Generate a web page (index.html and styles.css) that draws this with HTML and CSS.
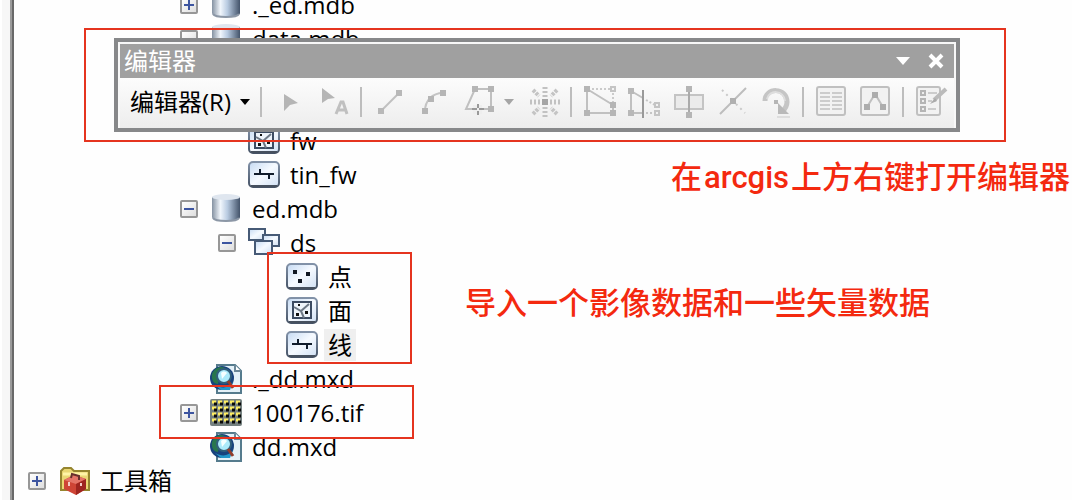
FILE: index.html
```html
<!DOCTYPE html>
<html lang="zh-CN">
<head>
<meta charset="utf-8">
<title>编辑器</title>
<link rel="stylesheet" href="styles.css">
</head>
<body>
<svg class="defs" aria-hidden="true">
  <defs>
    <linearGradient id="metal"><stop offset="0" stop-color="#8592a2"/><stop offset=".3" stop-color="#f1f6fc"/><stop offset=".55" stop-color="#b9cbe1"/><stop offset="1" stop-color="#43536a"/></linearGradient>
    <linearGradient id="tile" x2="1" y2="1"><stop offset="0" stop-color="#c5daf3"/><stop offset=".5" stop-color="#f6faff"/><stop offset="1" stop-color="#cfdff3"/></linearGradient>
    <linearGradient id="edge" x2="0" y2="1"><stop offset="0" stop-color="#8292a8"/><stop offset="1" stop-color="#465366"/></linearGradient>
    <symbol id="db" viewBox="0 0 32 32"><path d="M2 4v20c0 5 28 5 28 0V4z" fill="url(#metal)"/><ellipse cx="16" cy="4" rx="14" ry="3" fill="#dfe6ef"/><path d="M3 25c2 4 24 4 26 0" fill="none" stroke="#8c97a6" stroke-width="2"/></symbol>
    <symbol id="frame" viewBox="0 0 32 32"><rect x="1" y="3" width="30" height="25" rx="4" fill="url(#tile)" stroke="url(#edge)" stroke-width="2"/><path d="M3 27h26" stroke="#46505e" stroke-width="2"/></symbol>
    <symbol id="points" viewBox="0 0 32 32"><use href="#frame"/><path d="M7 9h4v4H7zM20 11h4v4h-4zM12 18h4v4h-4z" fill="#101722"/></symbol>
    <symbol id="area" viewBox="0 0 32 32"><use href="#frame"/><rect x="7" y="7" width="18" height="16" fill="#eef4fb" stroke="#3c4b62" stroke-width="2"/><path d="M8 12l7 4 8-7M15 16l3 7" fill="none" stroke="#6d7886" stroke-width="2"/><path d="M12 9h2v2h-2zM10 18h3v3h-3zM19 16h3v3h-3z" fill="#111"/></symbol>
    <symbol id="line" viewBox="0 0 32 32"><use href="#frame"/><path d="M6 15h20M12 10v5M21 15v5" fill="none" stroke="#111c2b" stroke-width="2"/></symbol>
    <symbol id="dataset" viewBox="0 0 32 32"><g fill="url(#tile)" stroke="#465a76" stroke-width="2"><path d="M1 2h16v11H1z"/><path d="M15 8h16v11H15z"/><path d="M7 14h17v13H7z"/></g></symbol>
    <symbol id="map" viewBox="0 0 32 32"><path d="M7 2h18l6 6v22H7z" fill="#e4f1f8" stroke="#557b8d" stroke-width="2"/><path d="M25 2v6h6" fill="#fff" stroke="#6b8798" stroke-width="2"/><circle cx="12" cy="15" r="12" fill="#18427d"/><path d="M2 11C5 4 11 3 15 5l-5 7-2 9C4 21 1 17 2 11z" fill="#28764d"/><path d="M5 22c7 4 14 3 18-3l-3 8H11z" fill="#2396c9"/><circle cx="14" cy="13" r="7" fill="#aceafa" stroke="#315f7b" stroke-width="2"/><path d="M11 10c3-3 5-1 6 0l-5 6z" fill="#f5ffff"/><path d="M18 18l5 7" stroke="#923c2b" stroke-width="3"/></symbol>
    <symbol id="raster" viewBox="0 0 32 32"><rect y="2" width="32" height="27" rx="2" fill="#74807f"/><g stroke-width="3" stroke-dasharray="4 2"><path d="M2 5h30M2 11h30M2 17h30M2 23h30" stroke="#ffee62"/></g><g stroke="#090909" stroke-width="3" stroke-dasharray="3 3"><path d="M4 7h27M4 13h27M4 19h27M4 25h27"/></g></symbol>
    <symbol id="toolbox" viewBox="0 0 32 32"><path d="M3 25V6l3-3h7l3 3h15v19z" fill="#ead774" stroke="#95852f" stroke-width="2"/><path d="M5 9h24" stroke="#fff4a7" stroke-width="3"/><path d="M6 15l10-5 12 4v10l-10 6L6 24z" fill="#ce4435"/><path d="M6 15l12 4 10-5-12-4z" fill="#e47467"/><path d="M18 19v11l10-6V14z" fill="#9e251f"/><path d="M13 13l1-4 7 2v4" fill="none" stroke="#662f2c" stroke-width="2"/><path d="M11 17v4M23 18v3" stroke="#f4cbc4" stroke-width="2"/></symbol>
  </defs>
</svg>
<main class="workspace">
  <div class="gutter"></div>
  <ul class="tree">
    <li class="row depth-4"><button class="toggle plus" aria-label="展开"></button><svg class="icon"><use href="#db"/></svg><span class="name">._ed.mdb</span></li>
    <li class="row depth-4"><button class="toggle" aria-label="折叠"></button><svg class="icon"><use href="#db"/></svg><span class="name">data.mdb</span></li>
    <li class="row depth-5 after-hidden"><span class="blank"></span><svg class="icon"><use href="#area"/></svg><span class="name">fw</span></li>
    <li class="row depth-5"><span class="blank"></span><svg class="icon"><use href="#line"/></svg><span class="name">tin_fw</span></li>
    <li class="row depth-4"><button class="toggle" aria-label="折叠"></button><svg class="icon"><use href="#db"/></svg><span class="name">ed.mdb</span></li>
    <li class="row depth-5"><button class="toggle" aria-label="折叠"></button><svg class="icon"><use href="#dataset"/></svg><span class="name">ds</span></li>
    <li class="row depth-6"><span class="blank"></span><svg class="icon"><use href="#points"/></svg><span class="name">点</span></li>
    <li class="row depth-6"><span class="blank"></span><svg class="icon"><use href="#area"/></svg><span class="name">面</span></li>
    <li class="row depth-6"><span class="blank"></span><svg class="icon"><use href="#line"/></svg><span class="name selected">线</span></li>
    <li class="row depth-4"><span class="blank"></span><svg class="icon"><use href="#map"/></svg><span class="name">._dd.mxd</span></li>
    <li class="row depth-4"><button class="toggle plus" aria-label="展开"></button><svg class="icon"><use href="#raster"/></svg><span class="name">100176.tif</span></li>
    <li class="row depth-4"><span class="blank"></span><svg class="icon"><use href="#map"/></svg><span class="name">dd.mxd</span></li>
    <li class="row depth-0"><button class="toggle plus" aria-label="展开"></button><svg class="icon"><use href="#toolbox"/></svg><span class="name">工具箱</span></li>
  </ul>

  <section class="editor">
    <header class="titlebar">
      <h1 class="title">编辑器</h1>
      <button class="tool small" aria-label="选项"><svg width="14" height="8" viewBox="0 0 14 8"><path d="M0 0h14L7 8z" fill="#fff"/></svg></button>
      <button class="tool small" aria-label="关闭"><svg width="16" height="16" viewBox="0 0 16 16"><path d="M2 2l12 12M14 2L2 14" stroke="#fff" stroke-width="4"/></svg></button>
    </header>
    <div class="tools">
      <button class="menu">编辑器(R)<svg width="10" height="6" viewBox="0 0 10 6"><path d="M0 0h10L5 6z" fill="#000"/></svg></button>
      <span class="sep"></span>
      <div class="group">
        <button class="tool" aria-label="编辑工具"><svg viewBox="0 0 32 32"><path d="M10 8l14 9-8 2-6 6z" fill="#b5b5b5"/></svg></button>
        <button class="tool" aria-label="编辑注记工具"><svg viewBox="0 0 32 32"><path d="M4 2l13 10-7 1-6 4z" fill="#b5b5b5"/><path d="M18 28l5-12h2l4 12M20 24h7" fill="none" stroke="#c0c0c0" stroke-width="3"/></svg></button>
      </div>
      <span class="sep"></span>
      <div class="group">
        <button class="tool" aria-label="直线段"><svg viewBox="0 0 32 32"><path d="M7 25L25 7" stroke="#c0c0c0" stroke-width="2"/><path d="M4 22h6v6H4zM22 4h6v6h-6z" fill="#b8b8b8"/></svg></button>
        <button class="tool" aria-label="弧段"><svg viewBox="0 0 32 32"><path d="M7 25c0-10 7-18 18-18" fill="none" stroke="#c4c4c4" stroke-width="2"/><path d="M4 22h6v6H4zM10 10h6v6h-6zM22 4h6v6h-6z" fill="#b5b5b5"/></svg></button>
        <button class="tool" aria-label="追踪"><svg viewBox="0 0 32 32"><path d="M13 3h16v20H4z" fill="none" stroke="#c0c0c0" stroke-width="2"/><path d="M10 0h6v6h-6zM26 0h6v6h-6zM26 20h6v6h-6z" fill="#b5b5b5"/><path d="M11 19h9v9h-9z" fill="#eee"/><path d="M16 18v4M16 25v4M10 23h5M17 23h5" stroke="#999" stroke-width="2"/></svg></button>
      </div>
      <button class="tool drop" aria-label="更多构造工具"><svg width="10" height="6" viewBox="0 0 10 6"><path d="M0 0h10L5 6z" fill="#a5a5a5"/></svg></button>
      <button class="tool" aria-label="点"><svg viewBox="0 0 32 32"><path d="M17 1v10M17 21v10M2 16h10M22 16h10" stroke="#c2c2c2" stroke-width="5" stroke-dasharray="2 2"/><path d="M5 4l6 6M29 4l-6 6M5 28l6-6M29 28l-6-6" stroke="#c4c4c4" stroke-width="4" stroke-dasharray="3 1"/><path d="M14 13h6v6h-6z" fill="#a5a5a5"/></svg></button>
      <span class="sep"></span>
      <div class="group">
        <button class="tool" aria-label="编辑折点"><svg viewBox="0 0 32 32"><path d="M3 3v24h26v-8L3 3" fill="none" stroke="#c0c0c0" stroke-width="2"/><path d="M8 3h19M29 7v9" stroke="#cbcbcb" stroke-width="2" stroke-dasharray="2 2"/><path d="M0 0h6v6H0zM0 24h6v6H0zM26 24h6v6h-6zM26 16h6v6h-6z" fill="#b5b5b5"/><path d="M27 1h4v4h-4z" fill="#f5f5f5" stroke="#c5c5c5" stroke-width="2"/></svg></button>
        <button class="tool" aria-label="整形要素"><svg viewBox="0 0 32 32"><path d="M3 5v22h12M3 5l12 7" fill="none" stroke="#c0c0c0" stroke-width="2"/><path d="M15 4v28" stroke="#999" stroke-width="2"/><path d="M18 14l9 5M18 27h7" stroke="#c5c5c5" stroke-width="2" stroke-dasharray="2 2"/><path d="M0 2h6v6H0zM0 24h6v6H0z" fill="#b8b8b8"/><path d="M27 17h4v4h-4zM27 25h4v4h-4z" fill="#f2f2f2" stroke="#c4c4c4" stroke-width="2"/></svg></button>
        <button class="tool" aria-label="裁剪面"><svg viewBox="0 0 32 32"><path d="M3 9h28v14H3z" fill="#ebebeb" stroke="#c4c4c4" stroke-width="2"/><path d="M17 2v28" stroke="#aaa" stroke-width="2"/><path d="M14 0h6v6h-6zM14 26h6v6h-6z" fill="#b5b5b5"/></svg></button>
        <button class="tool" aria-label="分割"><svg viewBox="0 0 32 32"><path d="M4 28L30 2" stroke="#bdbdbd" stroke-width="2"/><path d="M6 4l10 10M20 18l9 9" stroke="#c8c8c8" stroke-width="2" stroke-dasharray="2 4"/><path d="M14 12h6v6h-6z" fill="#b0b0b0"/></svg></button>
        <button class="tool" aria-label="旋转"><svg viewBox="0 0 32 32"><path d="M5 15C5 1 27 1 27 16c0 3-2 7-5 10" fill="none" stroke="#c5c5c5" stroke-width="5"/><path d="M7 13C9 3 24 4 25 15" fill="none" stroke="#ddd" stroke-width="2"/><path d="M18 17v11h11z" fill="#b9b9b9"/><path d="M14 14h4v4h-4z" fill="#b5b5b5"/><path d="M17 31h13" stroke="#ddd" stroke-width="2"/></svg></button>
      </div>
      <span class="sep"></span>
      <div class="group">
        <button class="tool" aria-label="属性"><svg viewBox="0 0 32 32"><rect x="1" y="1" width="28" height="28" rx="2" fill="#f2f2f2" stroke="#c0c0c0" stroke-width="2"/><path d="M4 7h10M16 7h10M4 11h10M16 11h10M4 15h10M16 15h10M4 19h10M16 19h10M4 23h10M16 23h10" stroke="#ccc" stroke-width="2"/></svg></button>
        <button class="tool" aria-label="草图属性"><svg viewBox="0 0 32 32"><rect x="1" y="1" width="28" height="28" rx="2" fill="#f2f2f2" stroke="#c0c0c0" stroke-width="2"/><path d="M7 21l8-13 8 13" fill="none" stroke="#c0c0c0" stroke-width="2"/><path d="M12 6h6v6h-6zM4 18h6v6H4zM20 18h6v6h-6z" fill="#adadad"/></svg></button>
      </div>
      <span class="sep"></span>
      <button class="tool" aria-label="创建要素"><svg viewBox="0 0 32 32"><rect x="1" y="1" width="23" height="28" rx="2" fill="#f2f2f2" stroke="#c0c0c0" stroke-width="2"/><path d="M5 5h4v4H5zM5 13h4v4H5zM5 21h4v4H5z" fill="#eee" stroke="#b5b5b5" stroke-width="2"/><path d="M12 7h9M12 15h4M12 23h8" stroke="#ccc" stroke-width="2"/><path d="M18 14L30 3" stroke="#bbb" stroke-width="4"/><path d="M14 18l5-6 2 3z" fill="#aaa"/></svg></button>
    </div>
  </section>

  <div class="mark mark-editor"></div>
  <div class="mark mark-vector"></div>
  <div class="mark mark-raster"></div>
  <p class="note note-editor">在<span class="latin">arcgis</span>上方右键打开编辑器</p>
  <p class="note note-data">导入一个影像数据和一些矢量数据</p>
</main>
</body>
</html>
```

FILE: styles.css
```css
* { box-sizing: border-box; }

body {
  margin: 0;
  background: #fefefe;
  color: #000;
  font: 24px/34px "Open Sans", "Noto Sans CJK SC", sans-serif;
  overflow: hidden;
}

button {
  margin: 0;
  padding: 0;
  border: 0;
  background: none;
  color: inherit;
  font: inherit;
}

svg { display: block; }

.defs { position: absolute; width: 0; height: 0; }

.workspace {
  position: relative;
  display: flex;
  height: 100vh;
  overflow: hidden;
}

.gutter {
  width: 14px;
  flex: none;
  background: linear-gradient(to right, #fff 2px, #f7f7f7 2px 10px, #9b9b9b 10px 12px, #696969 12px);
}

/* The list is scrolled by part of a row. */
.tree {
  flex: 1;
  margin: -12px 0 0;
  padding: 0;
  list-style: none;
}

.row {
  display: flex;
  align-items: center;
  height: 34px;
}

.depth-0 { padding-left: 14px; }
.depth-4 { padding-left: 166px; }
.depth-5 { padding-left: 204px; }
.depth-6 { padding-left: 242px; }
.after-hidden { margin-top: 68px; }

.toggle, .blank {
  width: 18px;
  height: 18px;
  margin-right: 12px;
  flex: none;
}

.toggle {
  border: 2px solid #979797;
  border-radius: 2px;
  background:
    linear-gradient(#3d55a0, #3d55a0) center / 10px 2px no-repeat,
    linear-gradient(135deg, #fff, #dedede);
}

.toggle.plus {
  background:
    linear-gradient(#3d55a0, #3d55a0) center / 10px 2px no-repeat,
    linear-gradient(#3d55a0, #3d55a0) center / 2px 10px no-repeat,
    linear-gradient(135deg, #fff, #dedede);
}

.icon {
  width: 32px;
  height: 32px;
  margin-right: 6px;
  flex: none;
}

.name { padding: 0 4px; line-height: 32px; white-space: nowrap; }
.selected { background: #efefef; }

.editor {
  position: absolute;
  top: 38px;
  left: 114px;
  padding: 2px 2px 0;
  border: 4px solid #87888a;
  background: #f8f8f8;
}

.titlebar {
  display: flex;
  align-items: center;
  gap: 18px;
  padding: 0 10px 0 4px;
  background: #a0a0a0;
  color: #fff;
}

.title { flex: 1; margin: 0; font: inherit; }

.tools {
  display: flex;
  align-items: center;
  padding: 8px 6px 10px 10px;
  background: linear-gradient(#fcfcfc, #ededed);
}

.menu {
  display: flex;
  align-items: center;
  gap: 9px;
  margin-right: 10px;
  line-height: 32px;
}

.group { display: flex; gap: 12px; }

.tool { width: 32px; height: 32px; flex: none; }
.tool.small { width: auto; height: auto; }
.tool.drop { width: 10px; height: auto; margin: 0 14px 0 10px; }

.sep {
  width: 2px;
  height: 30px;
  margin: 0 12px 0 10px;
  flex: none;
  background: #bdbdbd;
}

.menu + .sep { margin-left: 0; }

.mark { position: absolute; border: 2px solid #e5341f; }
.mark-editor { top: 28px; left: 84px; width: 922px; height: 114px; }
.mark-vector { top: 252px; left: 267px; width: 145px; height: 112px; }
.mark-raster { top: 385px; left: 159px; width: 255px; height: 54px; }

.note {
  position: absolute;
  margin: 0;
  color: #f4290f;
  font: 500 31px/40px Roboto, "Noto Sans CJK SC", sans-serif;
  white-space: nowrap;
}

.note-editor { top: 158px; right: 2px; }
.note-data { top: 284px; left: 465px; }
.latin { margin: 0 2px; }
```
